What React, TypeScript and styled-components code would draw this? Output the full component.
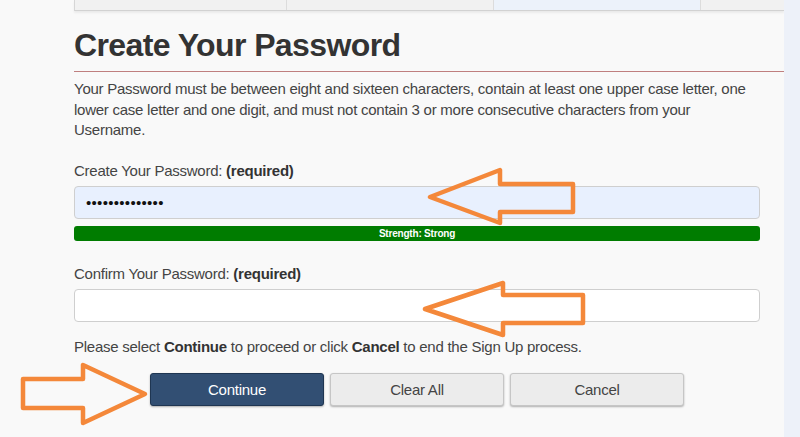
import React from 'react';
import styled, { createGlobalStyle } from 'styled-components';

const GlobalStyle = createGlobalStyle`
  html, body {
    margin: 0;
    padding: 0;
    background: #f9f9f9;
  }
  body {
    font-family: 'Liberation Sans', Arial, sans-serif;
    color: #444;
  }
`;

const arrows = [
  '430,197 500,170 500,184 573,184 573,212 500,212 500,223',
  '425,309 503,283 503,295 583,295 583,323 503,323 503,335',
  '145,394 83,365 83,379 23,379 23,408 83,408 83,423',
];

function App() {
  return (
    <>
      <GlobalStyle />
      <Page>
        <Main>
          <StepBar>
            <Step />
            <Step />
            <Step active />
            <Step last />
          </StepBar>
          <Title>Create Your Password</Title>
          <Intro>
            Your Password must be between eight and sixteen characters, contain at least one upper
            case letter, one lower case letter and one digit, and must not contain 3 or more
            consecutive characters from your Username.
          </Intro>
          <Form>
            <Field>
              <Label>
                Create Your Password: <b>(required)</b>
              </Label>
              <Input type="password" readOnly defaultValue="Abcdefgh12345x" filled />
              <Strength>Strength: Strong</Strength>
            </Field>
            <Field>
              <Label>
                Confirm Your Password: <b>(required)</b>
              </Label>
              <Input type="password" readOnly defaultValue="" />
            </Field>
          </Form>
          <Note>
            Please select <b>Continue</b> to proceed or click <b>Cancel</b> to end the Sign Up
            process.
          </Note>
          <Buttons>
            <Button primary>Continue</Button>
            <Button>Clear All</Button>
            <Button>Cancel</Button>
          </Buttons>
        </Main>
        <Side />
        <Overlay viewBox="0 0 800 437">
          {arrows.map((p) => (
            <polygon key={p} points={p} />
          ))}
        </Overlay>
      </Page>
    </>
  );
}

export default App;

const Page = styled.div`
  position: relative;
  display: flex;
  width: 800px;
  height: 437px;
  overflow: hidden;
`;

const Main = styled.div`
  flex: 1;
  padding-left: 74px;
  display: flex;
  flex-direction: column;
  letter-spacing: -0.25px;
`;

const Side = styled.div`
  width: 16px;
  background: #edf1f9;
`;

const StepBar = styled.div`
  display: flex;
  height: 10px;
  border-left: 1px solid #d6d6d6;
  border-bottom: 1px solid #d2d2d2;
  box-shadow: 0 2px 2px rgba(0, 0, 0, 0.06);
`;

const Step = styled.div<{ active?: boolean; last?: boolean }>`
  width: ${(p) => (p.last ? 'auto' : '206px')};
  flex: ${(p) => (p.last ? 1 : 'none')};
  background: ${(p) => (p.active ? '#ecf2fa' : '#f1f1f1')};
  border-right: ${(p) => (p.last ? 'none' : '1px solid #dcdcdc')};
  &:first-child {
    width: 211px;
  }
`;

const Title = styled.h1`
  margin: 16px 0 0;
  font-size: 32px;
  letter-spacing: -0.6px;
  line-height: 36px;
  font-weight: bold;
  color: #333;
  padding-bottom: 8px;
  border-bottom: 1px solid #bf7f7f;
`;

const Intro = styled.p`
  margin: 7px 0 0;
  max-width: 686px;
  font-size: 15px;
  line-height: 20.5px;
  color: #444;
`;

const Form = styled.div`
  width: 686px;
  display: flex;
  flex-direction: column;
  gap: 23px;
  margin-top: 20px;
`;

const Field = styled.div`
  display: flex;
  flex-direction: column;
`;

const Label = styled.label`
  font-size: 15px;
  line-height: 20px;
  color: #444;
  margin-bottom: 5px;
  b {
    color: #333;
  }
`;

const Input = styled.input<{ filled?: boolean }>`
  box-sizing: border-box;
  width: 100%;
  height: 33px;
  padding: 0 11px;
  border: 1px solid #cfcfcf;
  border-radius: 4px;
  background: ${(p) => (p.filled ? '#e8f0fe' : '#fff')};
  font-family: 'Liberation Sans', Arial, sans-serif;
  font-size: 15px;
  letter-spacing: 0.3px;
  color: #111;
  outline: none;
`;

const Strength = styled.div`
  margin-top: 7px;
  height: 15px;
  border-radius: 3px;
  background: #007c00;
  color: #fff;
  font-size: 10px;
  letter-spacing: -0.2px;
  font-weight: bold;
  line-height: 15px;
  text-align: center;
`;

const Note = styled.p`
  margin: 15px 0 0;
  font-size: 15px;
  line-height: 20px;
  color: #444;
  b {
    color: #333;
  }
`;

const Buttons = styled.div`
  width: 686px;
  display: flex;
  justify-content: center;
  gap: 6px;
  margin-top: 16px;
`;

const Button = styled.button<{ primary?: boolean }>`
  width: 174px;
  height: 33px;
  border-radius: 3px;
  border: 1px solid ${(p) => (p.primary ? '#1f3652' : '#c6c6c6')};
  background: ${(p) => (p.primary ? '#324f73' : '#ececec')};
  color: ${(p) => (p.primary ? '#fff' : '#444')};
  font-family: 'Liberation Sans', Arial, sans-serif;
  font-size: 15px;
  letter-spacing: -0.25px;
  box-shadow: 0 1px 2px rgba(0, 0, 0, 0.3);
`;

const Overlay = styled.svg`
  position: absolute;
  left: 0;
  top: 0;
  width: 800px;
  height: 437px;
  pointer-events: none;
  polygon {
    fill: none;
    stroke: #f4883a;
    stroke-width: 4.5;
    stroke-linejoin: round;
  }
`;
